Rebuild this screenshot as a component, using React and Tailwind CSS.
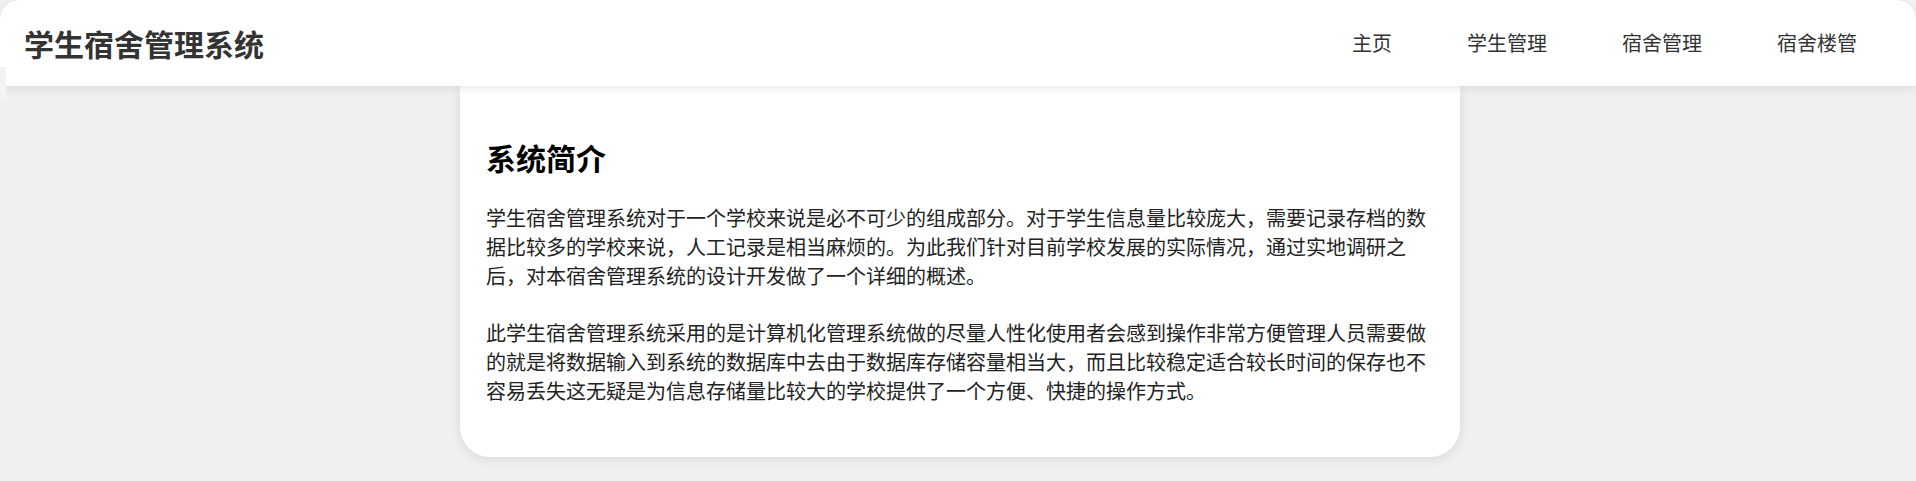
const navItems = ['主页', '学生管理', '宿舍管理', '宿舍楼管']

export default function App() {
  return (
    <div className="relative h-[481px] overflow-hidden bg-[#f0f0f0] font-['Noto_Sans_CJK_SC',sans-serif]">
      {/* Top bar */}
      <header className="relative z-10 flex h-[86px] items-center justify-between rounded-t-[20px] bg-white pl-[24px] pr-[59px] shadow-[0_3px_10px_rgba(0,0,0,0.08)]">
        <h1 className="text-[30px] font-bold leading-none text-[#333]">学生宿舍管理系统</h1>
        <nav className="flex items-center gap-[75px]">
          {navItems.map(item => (
            <a key={item} className="text-[20px] leading-none text-[#333]">
              {item}
            </a>
          ))}
        </nav>
      </header>

      {/* Side tab peeking in at the left edge */}
      <div className="absolute left-0 top-[67px] z-20 h-[33px] w-[6px] rounded-br-[5px] bg-[#f3f3f3]" />

      {/* Intro card */}
      <main className="flex justify-center pl-[4px]">
        <section className="w-[1000px] rounded-b-[30px] bg-white px-[26px] pb-[24px] pt-[49px] shadow-[0_2px_12px_rgba(0,0,0,0.1)]">
          <h2 className="mb-[23px] text-[30px] font-bold leading-[45px] text-black">系统简介</h2>
          <p className="mb-[28px] text-[20px] leading-[29px] text-[#222]">
            学生宿舍管理系统对于一个学校来说是必不可少的组成部分。对于学生信息量比较庞大，需要记录存档的数据比较多的学校来说，人工记录是相当麻烦的。为此我们针对目前学校发展的实际情况，通过实地调研之后，对本宿舍管理系统的设计开发做了一个详细的概述。
          </p>
          <p className="mb-[28px] text-[20px] leading-[29px] text-[#222]">
            此学生宿舍管理系统采用的是计算机化管理系统做的尽量人性化使用者会感到操作非常方便管理人员需要做的就是将数据输入到系统的数据库中去由于数据库存储容量相当大，而且比较稳定适合较长时间的保存也不容易丢失这无疑是为信息存储量比较大的学校提供了一个方便、快捷的操作方式。
          </p>
        </section>
      </main>
    </div>
  )
}
